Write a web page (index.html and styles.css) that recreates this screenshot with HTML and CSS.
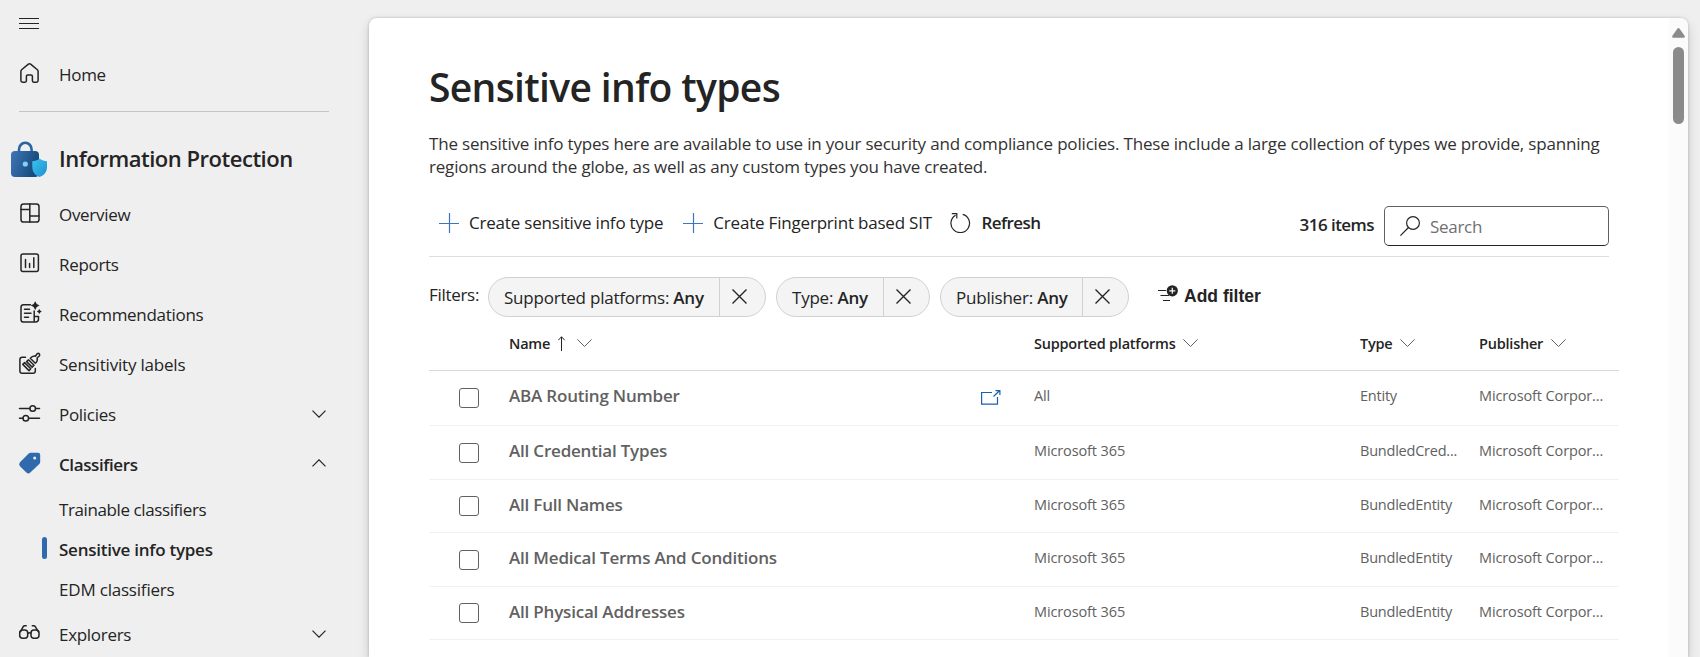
FILE: index.html
```html
<!DOCTYPE html>
<html lang="en">
<head>
<meta charset="utf-8">
<title>Sensitive info types</title>
<link rel="stylesheet" href="styles.css">
</head>
<body>
<div class="shell">
  <nav class="sidebar">
    <button class="menu" aria-label="Menu"><svg width="20" height="12" viewBox="0 0 20 12"><path d="M0 .5H20M0 5.5H20M0 10.5H20"/></svg></button>
    <a class="item"><svg class="ico" viewBox="0 0 26 26"><path d="M12.4 4.1 5.6 9.8Q4.9 10.4 4.9 11.3V20.5Q4.9 22.2 6.5 22.2H9Q10.4 22.2 10.4 20.8V16.2Q10.4 15 11.6 15H15.2Q16.4 15 16.4 16.2V20.8Q16.4 22.2 17.8 22.2H20.5Q22.1 22.2 22.1 20.5V11.3Q22.1 10.4 21.4 9.8L14.6 4.1Q13.5 3.3 12.4 4.1Z"/></svg><span>Home</span></a>
    <div class="rule"></div>
    <div class="section">
      <svg class="lock" width="36" height="36" viewBox="0 0 36 36">
        <defs>
          <linearGradient id="body" x1="0" y1="0" x2="1" y2=".35"><stop offset="0" stop-color="#3f76b8"/><stop offset="1" stop-color="#164a7c"/></linearGradient>
          <linearGradient id="shield" x1="0" y1="0" x2="1" y2="1"><stop offset="0" stop-color="#3ec3ee"/><stop offset="1" stop-color="#1b90d2"/></linearGradient>
        </defs>
        <path d="M8 12V8.500a6.300 6.700 0 0 1 12.600 0V12" fill="none" stroke="#2a64a2" stroke-width="2.600"/>
        <rect x="0" y="10" width="28" height="26" rx="4" fill="url(#body)"/>
        <circle cx="14.300" cy="23" r="2.600" fill="#7fd3f7"/>
        <path d="M28.600 17.600C31 19.600 33.400 20.100 36 20.200V26C36 31 33 34.300 28.600 36 24.200 34.300 21.300 31 21.300 26V20.200C24 20.100 26.400 19.600 28.600 17.600Z" fill="url(#shield)"/>
      </svg>
      <h2>Information Protection</h2>
    </div>
    <a class="item"><svg class="ico" viewBox="0 0 26 26"><rect x="5" y="4" width="18" height="18" rx="2.600"/><path d="M13.800 4V22M5 9.500H13.800M13.800 16H23"/></svg><span>Overview</span></a>
    <a class="item"><svg class="ico" viewBox="0 0 26 26"><rect x="5" y="4" width="17.400" height="17.400" rx="2"/><path d="M9.500 9.500V17.500M13.600 13.500V17.500M17.800 7.800V17.500"/></svg><span>Reports</span></a>
    <a class="item"><svg class="ico" viewBox="0 0 26 26"><path d="M14.500 4.700H7.600Q5 4.700 5 7.300V19.400Q5 22 7.600 22H19.500Q22.500 22 22.500 19V16.400H18.200V22M18.200 16.400V11M8.500 9.200H13.500M8.500 13.300H15M8.500 17.300H12.500"/><path class="solid" d="M19.200 1.200Q20.200 4.600 23.600 5.600 20.200 6.600 19.200 10 18.200 6.600 14.800 5.600 18.200 4.600 19.200 1.200ZM23.300 9.100Q23.900 11 25.800 11.600 23.900 12.200 23.300 14.100 22.700 12.200 20.800 11.600 22.700 11 23.300 9.100Z"/></svg><span>Recommendations</span></a>
    <a class="item labels"><svg class="ico" viewBox="0 0 26 26"><path d="M9.500 6.200H6.200Q3.900 6.200 3.900 8.500V19.900Q3.900 22.200 6.200 22.200H17Q19.300 22.200 19.300 19.900V17.500"/><path d="M6.800 13.400 8.600 11.600 14.800 17.800 13 19.600ZM10.600 10.600 12.500 8.700 18 14.200 16.100 16.100ZM14.300 7.300Q16.800 4.300 19.600 5.200L20.900 3Q22.200 1.800 23.300 2.800 24.300 3.900 23.100 5.200L21.200 6.800Q22 10 19.300 12.300Z"/></svg><span>Sensitivity labels</span></a>
    <a class="item"><svg class="ico" viewBox="0 0 26 26"><path d="M3.500 8.500H13.800M19.600 8.500H23.500M3.500 18.300H6.800M12.800 18.300H23.500"/><circle cx="16.700" cy="8.500" r="2.800"/><circle cx="9.800" cy="18.300" r="2.800"/></svg><span>Policies</span><svg class="chev" viewBox="0 0 14 8"><path d="M.5 .7 7 7.200 13.500 .7"/></svg></a>
    <a class="item strong"><svg class="ico" viewBox="0 0 26 26"><path class="tag" fill-rule="evenodd" d="M14.500 2.700H22Q24.200 2.700 24.200 5V11.800Q24.200 13 23.300 13.900L14.300 22.600Q12.300 24.400 10.400 22.600L4 16.200Q2.200 14.200 4 12.300L12.700 3.500Q13.500 2.700 14.500 2.700ZM18.700 6.600A1.500 1.500 0 1 0 18.700 9.600 1.500 1.500 0 1 0 18.700 6.600Z"/></svg><span>Classifiers</span><svg class="chev up" viewBox="0 0 14 8"><path d="M.5 7.300 7 .8 13.500 7.300"/></svg></a>
    <a class="sub"><span>Trainable classifiers</span></a>
    <a class="sub current"><span>Sensitive info types</span></a>
    <a class="sub edm"><span>EDM classifiers</span></a>
    <a class="item last"><svg class="ico" viewBox="0 0 26 26"><path d="M10.200 5.800H8.700Q7.700 5.800 7.200 6.600L4.600 11.600M16.300 5.800H17.800Q18.800 5.800 19.300 6.600L22.300 11.600M11.800 13.300Q13.300 12.200 14.800 13.300"/><rect x="3.700" y="10" width="8" height="8.300" rx="3"/><rect x="15" y="10" width="8" height="8.300" rx="3"/></svg><span>Explorers</span><svg class="chev" viewBox="0 0 14 8"><path d="M.5 .7 7 7.200 13.500 .7"/></svg></a>
  </nav>

  <main class="panel">
    <div class="content">
      <h1>Sensitive info types</h1>
      <p class="desc">The sensitive info types here are available to use in your security and compliance policies. These include a large collection of types we provide, spanning<br>regions around the globe, as well as any custom types you have created.</p>

      <div class="toolbar">
        <button class="cmd"><svg class="plus" width="20" height="20" viewBox="0 0 20 20"><path d="M10.500 0V20M0 10.500H20"/></svg><span>Create sensitive info type</span></button>
        <button class="cmd second"><svg class="plus" width="20" height="20" viewBox="0 0 20 20"><path d="M10.500 0V20M0 10.500H20"/></svg><span>Create Fingerprint based SIT</span></button>
        <button class="cmd"><svg width="21" height="20" viewBox="0 0 21 20"><path d="M12.700 1.300A9.300 9.300 0 1 1 5.600 2.200M1.800 .6H6.800V5.400"/></svg><span class="semi">Refresh</span></button>
        <span class="count">316 items</span>
        <div class="search"><svg width="20" height="20" viewBox="0 0 20 20"><circle cx="13" cy="7" r="6.400"/><path d="M8.500 11.500 .4 19.600"/></svg><span>Search</span></div>
      </div>

      <div class="filters">
        <span class="flabel">Filters:</span>
        <div class="chip w1"><span class="ctext">Supported platforms: <b>Any</b></span><span class="x"><svg viewBox="0 0 15 15"><path d="M.5 .5 14.500 14.500M14.500 .5 .5 14.500"/></svg></span></div>
        <div class="chip w2"><span class="ctext">Type: <b>Any</b></span><span class="x"><svg viewBox="0 0 15 15"><path d="M.5 .5 14.500 14.500M14.500 .5 .5 14.500"/></svg></span></div>
        <div class="chip w3"><span class="ctext">Publisher: <b>Any</b></span><span class="x"><svg viewBox="0 0 15 15"><path d="M.5 .5 14.500 14.500M14.500 .5 .5 14.500"/></svg></span></div>
        <button class="add"><svg width="20" height="18" viewBox="0 0 20 18"><path class="bars" d="M0 5.500H8M2.500 10.500H11M5 15.500H12"/><circle cx="14.300" cy="5.800" r="5.600"/><path class="cross" d="M14.300 2.800V8.800M11.300 5.800H17.300"/></svg><span>Add filter</span></button>
      </div>

      <div class="table">
        <div class="row head">
          <span></span>
          <span class="th">Name<svg class="sort" width="8" height="15" viewBox="0 0 8 15"><path d="M3.500 15V.8M.3 4.200 3.500 .8 6.700 4.200"/></svg><svg class="dd" viewBox="0 0 15 8"><path d="M.4 .4 7.500 7.500 14.600 .4"/></svg></span>
          <span></span>
          <span class="th">Supported platforms<svg class="dd" viewBox="0 0 15 8"><path d="M.4 .4 7.500 7.500 14.600 .4"/></svg></span>
          <span class="th">Type<svg class="dd" viewBox="0 0 15 8"><path d="M.4 .4 7.500 7.500 14.600 .4"/></svg></span>
          <span class="th">Publisher<svg class="dd" viewBox="0 0 15 8"><path d="M.4 .4 7.500 7.500 14.600 .4"/></svg></span>
        </div>
        <div class="row first"><i class="box"></i><span class="name">ABA Routing Number</span><svg class="open" width="20" height="15" viewBox="0 0 20 15"><path d="M11 2.500H.6V14.200H16.500V7M12.500 6.500 18.500 .8M14.500 .6H18.900V5"/></svg><span>All</span><span class="type">Entity</span><span>Microsoft Corpor...</span></div>
        <div class="row"><i class="box"></i><span class="name">All Credential Types</span><span></span><span>Microsoft 365</span><span class="type">BundledCred...</span><span>Microsoft Corpor...</span></div>
        <div class="row"><i class="box"></i><span class="name">All Full Names</span><span></span><span>Microsoft 365</span><span class="type">BundledEntity</span><span>Microsoft Corpor...</span></div>
        <div class="row"><i class="box"></i><span class="name">All Medical Terms And Conditions</span><span></span><span>Microsoft 365</span><span class="type">BundledEntity</span><span>Microsoft Corpor...</span></div>
        <div class="row"><i class="box"></i><span class="name">All Physical Addresses</span><span></span><span>Microsoft 365</span><span class="type">BundledEntity</span><span>Microsoft Corpor...</span></div>
      </div>
    </div>
    <div class="scroll"><svg width="13" height="10" viewBox="0 0 13 10"><path d="M5.200 1Q6.500-.8 7.800 1L12.600 7.800Q13.400 9.800 11.500 9.800H1.500Q-.4 9.800 .4 7.800Z"/></svg><div class="thumb"></div></div>
  </main>
</div>
</body>
</html>
```
FILE: styles.css
```css
* { box-sizing: border-box; }
body {
  margin: 0;
  height: 657px;
  overflow: hidden;
  background: #efefef;
  color: #242424;
  font: 17px/24px "Open Sans", "Noto Sans", sans-serif;
  letter-spacing: -0.3px;
}
svg { display: block; flex: none; fill: none; stroke: #242424; stroke-width: 1.2; }
button { margin: 0; padding: 0; border: 0; background: none; color: inherit; font: inherit; letter-spacing: inherit; }
span { white-space: nowrap; }
.shell { display: flex; height: 657px; }

/* Sidebar */
.sidebar { width: 369px; height: 657px; flex: none; }
.menu { display: flex; height: 49px; padding: 18px 0 0 19px; }
.menu svg { stroke-width: 1; }
.item { display: flex; align-items: center; height: 50px; padding: 0 43px 0 16px; }
.item span, .sub span { padding-top: 1px; }
.item.last { height: 48px; padding-top: 2px; }
.ico { width: 26px; height: 26px; margin: -2px 17px 0 0; stroke-width: 1.5; stroke-linecap: round; stroke-linejoin: round; }
.ico .solid { fill: #242424; stroke: none; }
.ico .tag { fill: #2f6aad; stroke: none; }
.labels .ico { margin-top: 0; }
.labels { letter-spacing: -0.2px; }
.strong { letter-spacing: -0.4px; }
.chev { width: 14px; height: 8px; margin-left: auto; }
.chev.up { margin-top: -3px; }
.rule { height: 1px; margin: 12px 40px 23px 19px; background: #c4c4c4; }
.section { display: flex; align-items: center; height: 48px; margin-bottom: 6px; padding-left: 11px; }
.section h2 { margin: -2px 0 0 12px; font-size: 22px; font-weight: 600; letter-spacing: -0.48px; }
.lock { margin-top: -1px; stroke: none; }
.strong, .current { font-weight: 600; }
.sub { display: flex; align-items: center; height: 40px; padding-left: 59px; letter-spacing: -0.4px; }
.sub.edm { letter-spacing: -0.2px; }
.sub.current { padding-left: 42px; letter-spacing: -0.25px; }
.current::before { content: ""; width: 5px; height: 22px; margin: -2px 12px 0 0; border-radius: 2.5px; background: #2f6aad; }

/* Page panel */
.panel {
  display: flex;
  width: 1319px;
  height: 639px;
  margin-top: 18px;
  border-radius: 8px 8px 0 0;
  background: #fff;
  box-shadow: 0 0 3px rgba(0,0,0,.2), 0 5px 12px rgba(0,0,0,.16);
}
.content { width: 1300px; padding-left: 60px; }
h1 { margin: 42px 0 0; font-size: 39px; line-height: 54px; font-weight: 600; letter-spacing: -0.65px; }
.desc { margin: 18px 0 0; line-height: 23px; letter-spacing: -0.185px; color: #323232; white-space: nowrap; }

.toolbar { display: flex; align-items: center; width: 1180px; height: 78px; margin-top: 1px; padding: 11px 0 0 10px; border-bottom: 1px solid #dedede; }
.cmd { display: flex; align-items: center; gap: 10px; margin-right: 20px; letter-spacing: -0.2px; }
.cmd.second { margin-right: 18.5px; }
.plus { stroke: #3f74c0; }
.semi, .count { font-weight: 600; letter-spacing: -0.55px; }
.count { margin: 3px 10px 0 auto; }
.search { display: flex; align-items: center; gap: 10px; width: 225px; height: 40px; margin-top: 6px; padding-left: 15px; border: 1px solid #616161; border-bottom-color: #242424; border-radius: 5px; color: #707070; }
.search span { padding-top: 2px; }

.filters { display: flex; height: 60px; padding-top: 20px; }
.flabel { width: 59px; padding-top: 6px; }
.chip { display: flex; height: 40px; margin-right: 10px; border: 1px solid #d1d1d1; border-radius: 20px; background: #f4f4f4; }
.chip b { font-weight: 600; }
.ctext { flex: 1; padding: 8px 0 0 15px; letter-spacing: -0.22px; }
.x { display: flex; align-items: center; width: 46px; padding: 0 0 2px 12px; border-left: 1px solid #d1d1d1; }
.x svg { width: 15px; height: 15px; stroke-width: 1.4; }
.w1 { width: 278px; }
.w2 { width: 154px; }
.w3 { width: 189px; }
.add { display: flex; height: 38px; gap: 6px; margin-left: 19px; padding-top: 7px; font: 700 17.5px/24px "Liberation Sans", Arial, sans-serif; letter-spacing: 0; }
.add svg { margin-top: 1px; }
.add circle { fill: #242424; stroke: none; }
.add .cross { stroke: #fff; }

/* List */
.table { width: 1190px; }
.row { display: grid; grid-template-columns: 80px 472px 53px 326px 119px 140px; align-items: center; height: 53.5px; border-bottom: 1px solid #f1f1f1; color: #616161; font-size: 14.5px; letter-spacing: -0.12px; }
.row > span { margin-top: -2px; }
.row .type { letter-spacing: -0.22px; }
.row.first { height: 55px; }
.row.first > span { margin-top: -5px; }
.row.head { height: 54px; border-color: #dadada; color: #242424; font-weight: 600; letter-spacing: -0.22px; }
.row.head > span { margin-top: 1px; }
.th { display: flex; align-items: center; }
.dd { width: 15px; height: 8px; margin: -2px 0 0 7.5px; stroke: #616161; stroke-width: 1; }
.sort { margin: -2px 0 0 8px; stroke-width: 1; }
.sort + .dd { margin-left: 11px; }
.row .name { font-size: 17px; font-weight: 600; letter-spacing: -0.2px; }
.box { width: 20px; height: 20px; margin: 1px 0 0 30px; border: 1px solid #616161; border-radius: 3px; }
.first .box { margin-top: 0; }
.open { margin-top: -2px; stroke: #1a62ae; }

/* Scroll track */
.scroll { display: flex; flex-direction: column; align-items: center; width: 19px; padding-top: 10px; border-radius: 0 8px 0 0; background: #fbfbfb; }
.scroll svg { fill: #8b8b8b; stroke: none; }
.thumb { width: 11px; height: 77px; margin-top: 9px; border-radius: 6px; background: #8b8b8b; }
```
